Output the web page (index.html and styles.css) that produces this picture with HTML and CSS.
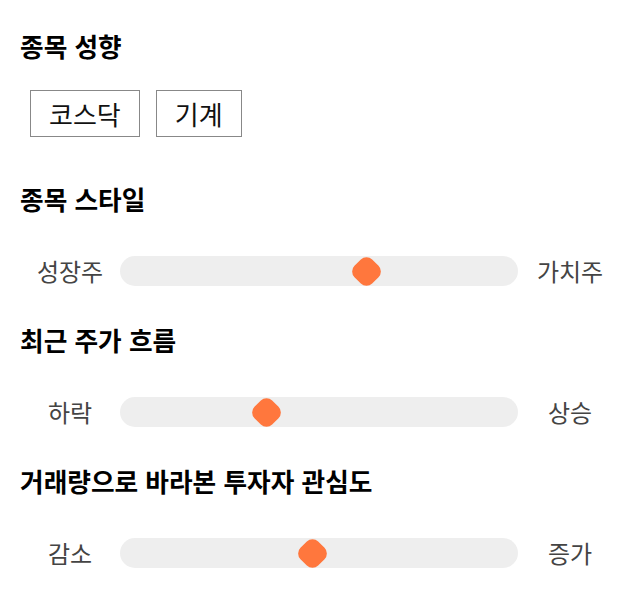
FILE: index.html
```html
<!DOCTYPE html>
<html lang="ko">
<head>
<meta charset="utf-8">
<link rel="stylesheet" href="styles.css">
</head>
<body>
<div class="page">
  <h2 class="title first">종목 성향</h2>
  <div class="chips">
    <div class="chip">코스닥</div>
    <div class="chip">기계</div>
  </div>

  <h2 class="title after-chips">종목 스타일</h2>
  <div class="slider-row">
    <span class="label">성장주</span>
    <div class="track"><span class="thumb" style="left: 62.06%"></span></div>
    <span class="label">가치주</span>
  </div>

  <h2 class="title">최근 주가 흐름</h2>
  <div class="slider-row">
    <span class="label">하락</span>
    <div class="track"><span class="thumb" style="left: 36.93%"></span></div>
    <span class="label">상승</span>
  </div>

  <h2 class="title">거래량으로 바라본 투자자 관심도</h2>
  <div class="slider-row">
    <span class="label">감소</span>
    <div class="track"><span class="thumb" style="left: 48.49%"></span></div>
    <span class="label">증가</span>
  </div>
</div>
</body>
</html>
```
FILE: styles.css
```css
html, body {
  margin: 0;
  padding: 0;
  background: #ffffff;
}
body {
  font-family: "Noto Sans CJK KR", "Noto Sans", sans-serif;
  color: #111;
}
.page {
  padding: 0 20px;
  display: flex;
  flex-direction: column;
}
.title {
  margin: 39px 0 0 0;
  font-size: 25.7px;
  font-weight: 700;
  line-height: 30px;
  height: 30px;
  color: #000;
}
.title.first {
  margin-top: 31px;
}
.title.after-chips {
  margin-top: 47px;
}
.chips {
  display: flex;
  gap: 16px;
  margin: 29px 0 0 10px;
}
.chip {
  box-sizing: border-box;
  height: 47px;
  padding: 0 18px;
  border: 1px solid #888;
  font-size: 26px;
  line-height: 45px;
  color: #111;
}
.slider-row {
  display: flex;
  align-items: center;
  margin-top: 42px;
  height: 30px;
}
.label {
  width: 100px;
  text-align: center;
  font-size: 24px;
  color: #444;
  line-height: 30px;
}
.track {
  position: relative;
  flex: 1;
  height: 30px;
  margin-right: 2px;
  background: #eeeeee;
  border-radius: 15px;
}
.thumb {
  position: absolute;
  top: 50%;
  width: 25px;
  height: 25px;
  margin-left: -12.5px;
  margin-top: -12.5px;
  background: #ff773d;
  border-radius: 8px;
  transform: rotate(45deg);
}
```
